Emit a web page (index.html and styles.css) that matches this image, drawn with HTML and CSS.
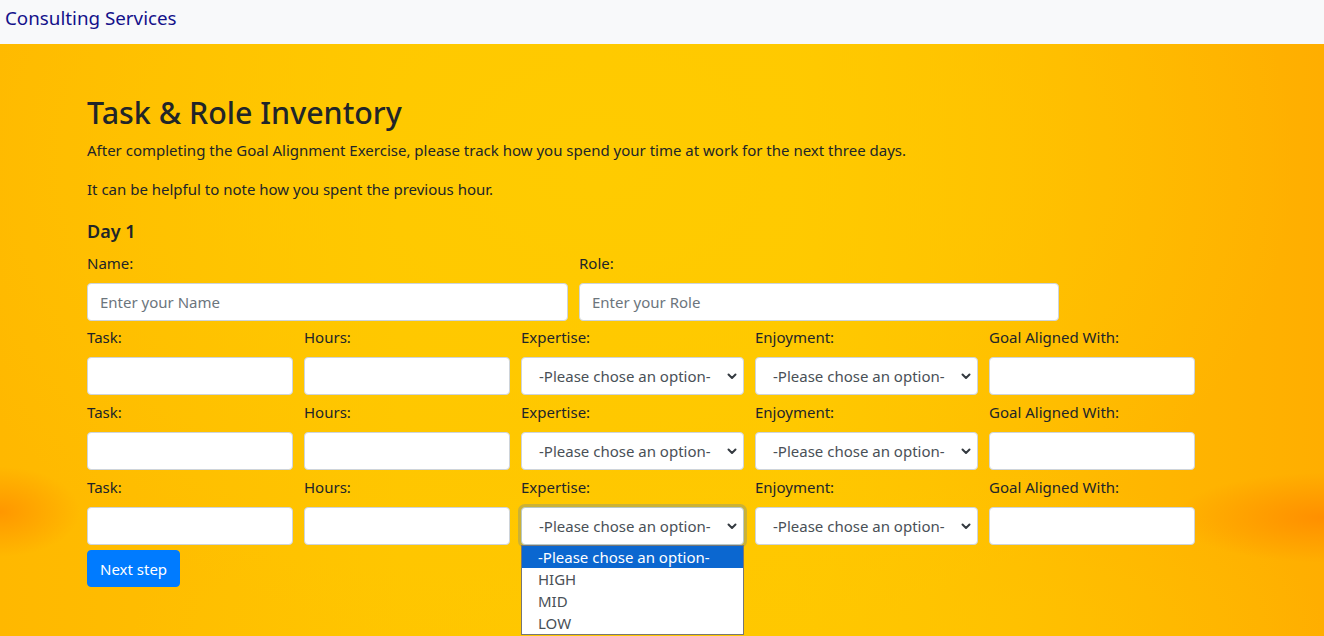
FILE: index.html
```html
<!DOCTYPE html>
<html lang="en">
<head>
<meta charset="utf-8">
<title>Task &amp; Role Inventory</title>
<link rel="stylesheet" href="styles.css">
</head>
<body>
<nav class="navbar"><a class="brand" href="#">Consulting Services</a></nav>
<main class="hero">
  <div class="container">
    <h2 class="title">Task &amp; Role Inventory</h2>
    <p class="lead-text">After completing the Goal Alignment Exercise, please track how you spend your time at work for the next three days.</p>
    <p class="lead-text">It can be helpful to note how you spent the previous hour.</p>
    <h5 class="day">Day 1</h5>
    <form class="form">
      <div class="row row-id">
        <div class="field"><label>Name:</label><input class="control" type="text" placeholder="Enter your Name"></div>
        <div class="field"><label>Role:</label><input class="control" type="text" placeholder="Enter your Role"></div>
      </div>

      <div class="row row-task">
        <div class="field"><label>Task:</label><input class="control" type="text"></div>
        <div class="field"><label>Hours:</label><input class="control" type="text"></div>
        <div class="field"><label>Expertise:</label><div class="select"><span>-Please chose an option-</span><svg class="chev" width="10" height="7" viewBox="0 0 10 7"><path d="M1.5 1.5 L5 5 L8.5 1.5" fill="none" stroke="#343a40" stroke-width="2" stroke-linecap="round" stroke-linejoin="round"/></svg></div></div>
        <div class="field"><label>Enjoyment:</label><div class="select"><span>-Please chose an option-</span><svg class="chev" width="10" height="7" viewBox="0 0 10 7"><path d="M1.5 1.5 L5 5 L8.5 1.5" fill="none" stroke="#343a40" stroke-width="2" stroke-linecap="round" stroke-linejoin="round"/></svg></div></div>
        <div class="field"><label>Goal Aligned With:</label><input class="control" type="text"></div>
      </div>

      <div class="row row-task">
        <div class="field"><label>Task:</label><input class="control" type="text"></div>
        <div class="field"><label>Hours:</label><input class="control" type="text"></div>
        <div class="field"><label>Expertise:</label><div class="select"><span>-Please chose an option-</span><svg class="chev" width="10" height="7" viewBox="0 0 10 7"><path d="M1.5 1.5 L5 5 L8.5 1.5" fill="none" stroke="#343a40" stroke-width="2" stroke-linecap="round" stroke-linejoin="round"/></svg></div></div>
        <div class="field"><label>Enjoyment:</label><div class="select"><span>-Please chose an option-</span><svg class="chev" width="10" height="7" viewBox="0 0 10 7"><path d="M1.5 1.5 L5 5 L8.5 1.5" fill="none" stroke="#343a40" stroke-width="2" stroke-linecap="round" stroke-linejoin="round"/></svg></div></div>
        <div class="field"><label>Goal Aligned With:</label><input class="control" type="text"></div>
      </div>

      <div class="row row-task">
        <div class="field"><label>Task:</label><input class="control" type="text"></div>
        <div class="field"><label>Hours:</label><input class="control" type="text"></div>
        <div class="field open"><label>Expertise:</label><div class="select focus"><span>-Please chose an option-</span><svg class="chev" width="10" height="7" viewBox="0 0 10 7"><path d="M1.5 1.5 L5 5 L8.5 1.5" fill="none" stroke="#343a40" stroke-width="2" stroke-linecap="round" stroke-linejoin="round"/></svg></div>
          <ul class="dropdown">
            <li class="active">-Please chose an option-</li>
            <li>HIGH</li>
            <li>MID</li>
            <li>LOW</li>
          </ul>
        </div>
        <div class="field"><label>Enjoyment:</label><div class="select"><span>-Please chose an option-</span><svg class="chev" width="10" height="7" viewBox="0 0 10 7"><path d="M1.5 1.5 L5 5 L8.5 1.5" fill="none" stroke="#343a40" stroke-width="2" stroke-linecap="round" stroke-linejoin="round"/></svg></div></div>
        <div class="field"><label>Goal Aligned With:</label><input class="control" type="text"></div>
      </div>

      <button type="button" class="btn">Next step</button>
    </form>
  </div>
</main>
</body>
</html>
```

FILE: styles.css
```css
* { box-sizing: border-box; }
html, body { margin: 0; padding: 0; }
body {
  font-family: "Noto Sans", "Open Sans", sans-serif;
  font-size: 15px;
  line-height: 24px;
  color: #212529;
  background: #ffc400;
  height: 636px;
  overflow: hidden;
}
.navbar {
  height: 44px;
  background: #f8f9fa;
  padding: 3px 5px 0;
}
.brand {
  font-size: 18.8px;
  line-height: 30px;
  color: #14118a;
  text-decoration: none;
}
.hero {
  height: 592px;
  padding-top: 50px;
  background:
    radial-gradient(ellipse 150px 45px at 100% 80%, rgba(255,140,0,0.9), rgba(255,150,0,0) 100%),
    radial-gradient(ellipse 80px 45px at 0% 79%, rgba(255,140,0,0.75), rgba(255,150,0,0) 100%),
    radial-gradient(ellipse 700px 500px at 45% 20%, rgba(255,204,0,0.9), rgba(255,200,0,0) 100%),
    radial-gradient(ellipse 600px 200px at 55% 100%, rgba(255,200,0,0.8), rgba(255,200,0,0) 100%),
    linear-gradient(90deg, #ffb800 0%, #ffc400 30%, #ffc600 60%, #ffae00 100%);
}
.container {
  width: 1150px;
  margin: 0 auto;
}
.title {
  margin: 0 0 6px;
  font-size: 30.4px;
  line-height: 38px;
  font-weight: 500;
  color: #212529;
}
.lead-text {
  margin: 0 0 15px;
}
.day {
  margin: 18px 0 8px;
  font-size: 18px;
  line-height: 24px;
  font-weight: 600;
}
.form { display: flex; flex-direction: column; }
.row {
  display: grid;
  column-gap: 11px;
  margin-bottom: 5px;
}
.row-id { grid-template-columns: 481px 480px; margin-bottom: 4px; }
.row-task { grid-template-columns: 206px 206px 223px 223px 206px; }
.field { position: relative; display: flex; flex-direction: column; }
.field label {
  display: block;
  margin-bottom: 8px;
  line-height: 24px;
}
.control {
  height: 38px;
  border: 1px solid #ced4da;
  border-radius: 4px;
  background: #fff;
  padding: 6px 12px;
  font-family: inherit;
  font-size: 15px;
  color: #495057;
  outline: none;
}
.control::placeholder { color: #6c757d; }
.select {
  position: relative;
  height: 38px;
  border: 1px solid #ced4da;
  border-radius: 4px;
  background: #fff;
  padding: 6px 0 0 17px;
  color: #495057;
  white-space: nowrap;
}
.select.focus {
  border-color: #b8c9c8;
  box-shadow: 0 0 0 3px rgba(140,150,120,0.45);
}
.chev {
  position: absolute;
  right: 6px;
  top: 15px;
}
.dropdown {
  position: absolute;
  top: 100%;
  left: 0;
  width: 100%;
  margin: 0;
  padding: 0;
  list-style: none;
  background: #fff;
  border: 1px solid #767676;
  z-index: 5;
}
.dropdown li {
  height: 22px;
  line-height: 22px;
  padding-left: 16px;
  color: #495057;
}
.dropdown li.active {
  background: #0b67d0;
  color: #fff;
}
.btn {
  align-self: flex-start;
  margin-top: 0;
  height: 37px;
  padding: 0 12px;
  border: 1px solid #007bff;
  border-radius: 4px;
  background: #007bff;
  color: #fff;
  font-family: inherit;
  font-size: 15px;
  cursor: pointer;
}
```
